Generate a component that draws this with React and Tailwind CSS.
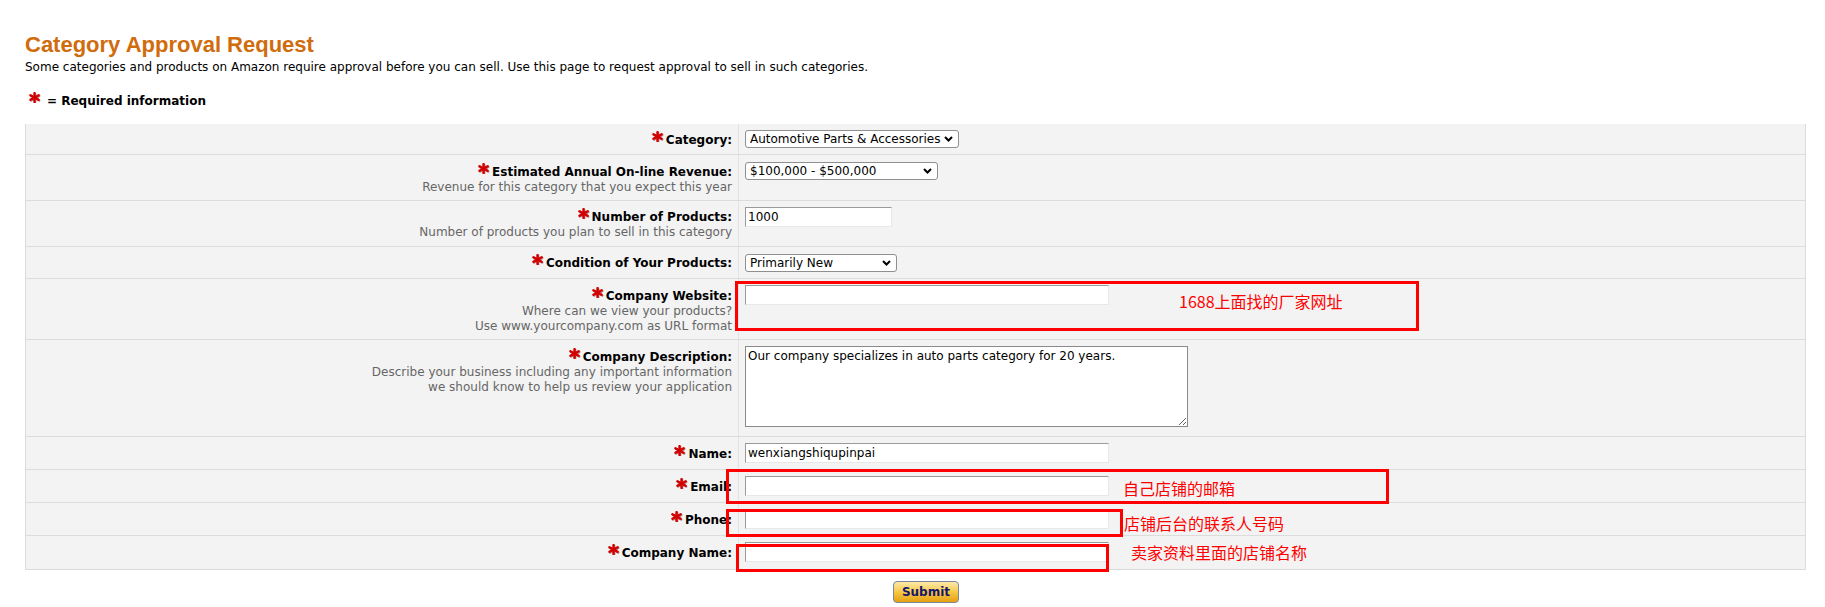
import React from 'react';

// red required-field asterisk
const Star = ({ className = '' }) => (
  <svg viewBox="0 0 13 12" width="13" height="11" className={`inline-block ${className}`}>
    <g stroke="#7a1010" strokeWidth="2.6" strokeLinecap="round" opacity="0.55" transform="translate(0.7 0.7)">
      <line x1="6.5" y1="1.2" x2="6.5" y2="10.8" />
      <line x1="2" y1="3.5" x2="11" y2="8.5" />
      <line x1="2" y1="8.5" x2="11" y2="3.5" />
    </g>
    <g stroke="#d40000" strokeWidth="2.6" strokeLinecap="round">
      <line x1="6.5" y1="1.2" x2="6.5" y2="10.8" />
      <line x1="2" y1="3.5" x2="11" y2="8.5" />
      <line x1="2" y1="8.5" x2="11" y2="3.5" />
    </g>
  </svg>
);

const Select = ({ width, value }) => (
  <div className={`relative ${width}`}>
    <select
      defaultValue={value}
      className="appearance-none block w-full h-[18px] rounded-[3px] border border-[#8f8f8f] bg-white pl-[4px] pr-[16px] text-[12px] leading-[16px] text-black font-['DejaVu_Sans',sans-serif]"
    >
      <option>{value}</option>
    </select>
    <svg className="pointer-events-none absolute right-[6px] top-[6px]" width="9" height="6" viewBox="0 0 9 6">
      <path d="M1 1l3.5 3.5L8 1" fill="none" stroke="#000" strokeWidth="2" />
    </svg>
  </div>
);

const TextInput = ({ width = 'w-[364px]', value = '' }) => (
  <input
    type="text"
    defaultValue={value}
    className={`${width} h-[20px] border border-t-[#9a9a9a] border-l-[#9a9a9a] border-r-[#e8e8e8] border-b-[#e8e8e8] bg-white px-[2px] text-[12px] text-black font-['DejaVu_Sans',sans-serif] outline-none`}
  />
);

const rows = [
  { label: 'Category:', h: 'h-[31px]', lp: 'pt-[9px]', ip: 'pt-[6px]', field: <Select width="w-[214px]" value="Automotive Parts & Accessories" /> },
  {
    label: 'Estimated Annual On-line Revenue:',
    help: ['Revenue for this category that you expect this year'],
    h: 'h-[46px]', lp: 'pt-[10px]', ip: 'pt-[7px]',
    field: <Select width="w-[193px]" value="$100,000 - $500,000" />,
  },
  {
    label: 'Number of Products:',
    help: ['Number of products you plan to sell in this category'],
    h: 'h-[46px]', lp: 'pt-[9px]', ip: 'pt-[6px]',
    field: <TextInput width="w-[147px]" value="1000" />,
  },
  { label: 'Condition of Your Products:', h: 'h-[32px]', lp: 'pt-[9px]', ip: 'pt-[7px]', field: <Select width="w-[152px]" value="Primarily New" /> },
  {
    label: 'Company Website:',
    help: ['Where can we view your products?', 'Use www.yourcompany.com as URL format'],
    h: 'h-[61px]', lp: 'pt-[10px]', ip: 'pt-[6px]',
    field: <TextInput />,
  },
  {
    label: 'Company Description:',
    help: ['Describe your business including any important information', 'we should know to help us review your application'],
    h: 'h-[97px]', lp: 'pt-[10px]', ip: 'pt-[6px]',
    field: (
      <textarea
        defaultValue="Our company specializes in auto parts category for 20 years."
        className="block w-[443px] h-[81px] border border-[#8a8a8a] bg-white p-[2px] text-[12px] leading-[15px] text-black font-['DejaVu_Sans',sans-serif] outline-none"
      />
    ),
  },
  { label: 'Name:', h: 'h-[33px]', lp: 'pt-[10px]', ip: 'pt-[6px]', field: <TextInput value="wenxiangshiqupinpai" /> },
  { label: 'Email:', h: 'h-[33px]', lp: 'pt-[10px]', ip: 'pt-[6px]', field: <TextInput /> },
  { label: 'Phone:', h: 'h-[33px]', lp: 'pt-[10px]', ip: 'pt-[6px]', field: <TextInput /> },
  { label: 'Company Name:', h: 'h-[34px]', lp: 'pt-[10px]', ip: 'pt-[6px]', field: <TextInput /> },
];

// red annotation boxes drawn over the form
const notes = [
  { box: 'left-[735px] top-[281px] w-[684px] h-[50px]', text: '1688上面找的厂家网址', pos: 'left-[1179px] top-[292px]' },
  { box: 'left-[726px] top-[469px] w-[663px] h-[35px]', text: '自己店铺的邮箱', pos: 'left-[1123px] top-[479px]' },
  { box: 'left-[726px] top-[509px] w-[397px] h-[28px]', text: '店铺后台的联系人号码', pos: 'left-[1124px] top-[514px]' },
  { box: 'left-[736px] top-[544px] w-[373px] h-[28px]', text: '卖家资料里面的店铺名称', pos: 'left-[1131px] top-[543px]' },
];

export default function App() {
  return (
    <div className="relative min-h-[607px] bg-white font-['DejaVu_Sans',sans-serif] text-[12px] leading-[15px] text-black">
      <div className="pl-[25px] pt-[32px]">
        <h1 className="font-['Liberation_Sans',Arial,sans-serif] text-[22px] leading-[26px] font-bold text-[#d06c0c]">
          Category Approval Request
        </h1>
        <p className="mt-[2px]">
          Some categories and products on Amazon require approval before you can sell. Use this page to request approval to sell in such categories.
        </p>
        <p className="mt-[19px] font-bold">
          <Star className="ml-[3px] mr-[6px] relative -top-[4px]" />= Required information
        </p>

        <div className="mt-[15px] w-[1781px] border-x border-[#dcdcdc] bg-[#f3f3f3]">
          {rows.map((r) => (
            <div key={r.label} className={`grid grid-cols-[712px_1fr] border-b border-[#dcdcdc] ${r.h}`}>
              <div className={`text-right pr-[6px] ${r.lp}`}>
                <div className="font-bold">
                  <Star className="mr-[2px] relative -top-[4px]" />
                  {r.label}
                </div>
                {r.help && r.help.map((t) => (
                  <div key={t} className="text-[#666]">{t}</div>
                ))}
              </div>
              <div className={`flex items-start border-l border-[#e2e2e2] pl-[6px] ${r.ip}`}>{r.field}</div>
            </div>
          ))}
        </div>

        <div className="flex justify-center w-[1781px] pl-[21px] pt-[11px]">
          <button
            type="button"
            className="w-[66px] h-[22px] rounded-[4px] border border-[#7b86a0] bg-linear-to-b from-[#fdeaa6] via-[#f5c842] to-[#e6a00a] text-[12px] leading-[20px] font-bold text-[#16166b]"
          >
            Submit
          </button>
        </div>
      </div>

      {notes.map((n) => (
        <React.Fragment key={n.text}>
          <div className={`absolute border-[3px] border-[#ff0000] ${n.box}`} />
          <div className={`absolute whitespace-nowrap font-['Noto_Sans_CJK_SC',sans-serif] text-[16px] leading-[18px] text-[#ff0000] ${n.pos}`}>
            {n.text}
          </div>
        </React.Fragment>
      ))}
    </div>
  );
}
